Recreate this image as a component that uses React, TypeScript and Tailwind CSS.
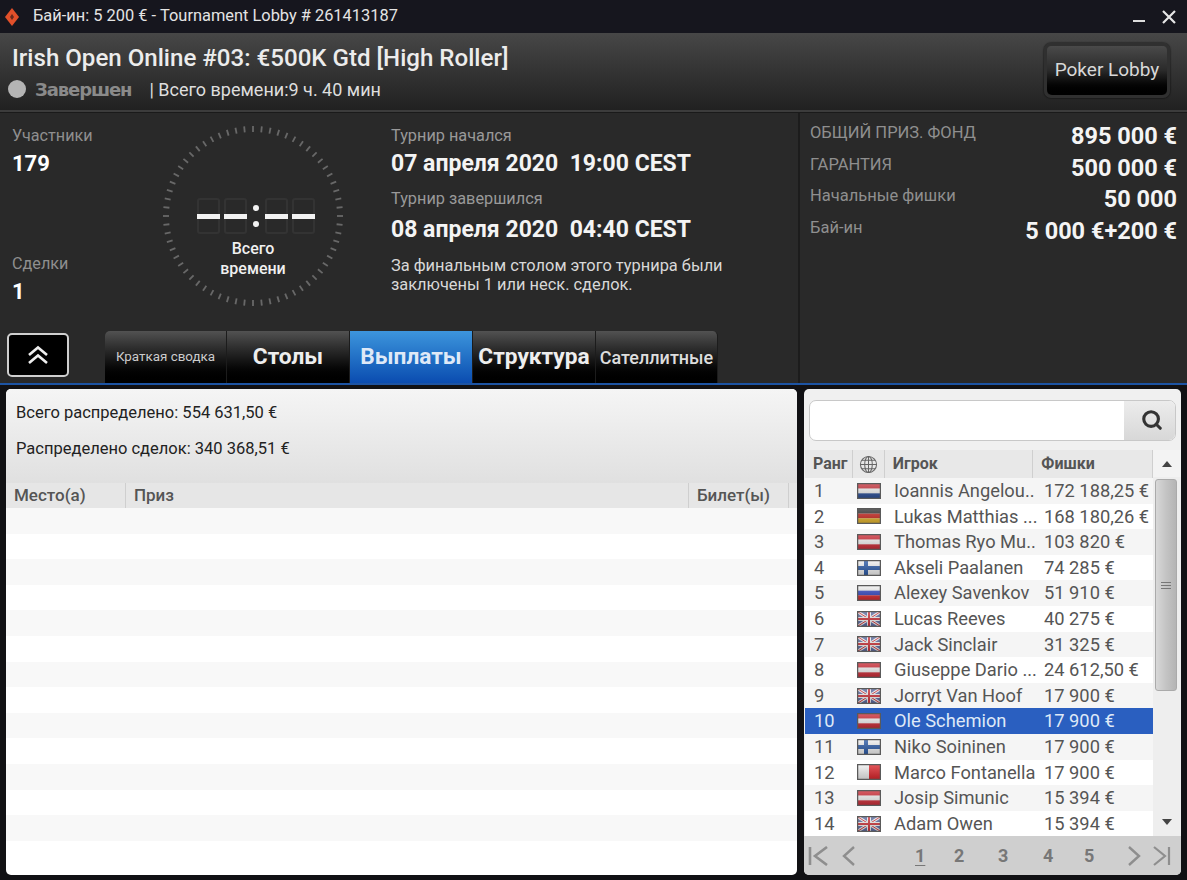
import React from 'react'
import { Search } from 'lucide-react'

type FlagKind = 'nl' | 'de' | 'at' | 'fi' | 'ru' | 'gb' | 'mt'

interface Player {
  name: string;
  chips: string;
  flag: FlagKind;
}

const players: Player[] = [
  { name: 'Ioannis Angelou..', chips: '172 188,25 €', flag: 'nl' },
  { name: 'Lukas Matthias ...', chips: '168 180,26 €', flag: 'de' },
  { name: 'Thomas Ryo Mu..', chips: '103 820 €', flag: 'at' },
  { name: 'Akseli Paalanen', chips: '74 285 €', flag: 'fi' },
  { name: 'Alexey Savenkov', chips: '51 910 €', flag: 'ru' },
  { name: 'Lucas Reeves', chips: '40 275 €', flag: 'gb' },
  { name: 'Jack Sinclair', chips: '31 325 €', flag: 'gb' },
  { name: 'Giuseppe Dario ...', chips: '24 612,50 €', flag: 'at' },
  { name: 'Jorryt Van Hoof', chips: '17 900 €', flag: 'gb' },
  { name: 'Ole Schemion', chips: '17 900 €', flag: 'at' },
  { name: 'Niko Soininen', chips: '17 900 €', flag: 'fi' },
  { name: 'Marco Fontanella', chips: '17 900 €', flag: 'mt' },
  { name: 'Josip Simunic', chips: '15 394 €', flag: 'at' },
  { name: 'Adam Owen', chips: '15 394 €', flag: 'gb' },
]

const stats = [
  { label: 'ОБЩИЙ ПРИЗ. ФОНД', value: '895 000 €' },
  { label: 'ГАРАНТИЯ', value: '500 000 €' },
  { label: 'Начальные фишки', value: '50 000' },
  { label: 'Бай-ин', value: '5 000 €+200 €' },
]

const tabs = [
  { label: 'Краткая сводка', width: 'w-[122px]', size: 'text-[13.4px] font-normal text-[#ccc]' },
  { label: 'Столы', width: 'w-[123px]', size: 'text-[22.7px] font-bold text-[#eee]' },
  { label: 'Выплаты', width: 'w-[123px]', size: 'text-[22.7px] font-bold text-[#dfe9f7]', active: true },
  { label: 'Структура', width: 'w-[123px]', size: 'text-[22.7px] font-bold text-[#eee]' },
  { label: 'Сателлитные', width: 'w-[122px]', size: 'text-[18px] font-medium text-[#ddd]' },
]

const Flag = ({ kind }: { kind: FlagKind }) => {
  const stripes: Record<string, string[]> = {
    nl: ['#c8323c', '#f4f4f4', '#2a4f9a'],
    de: ['#333333', '#cc2a22', '#e8b82c'],
    at: ['#cf2b36', '#f4f4f4', '#cf2b36'],
    ru: ['#f4f4f4', '#3348c4', '#d8282c'],
  }
  return (
    <svg width="24" height="16" viewBox="0 0 24 16" className="block">
      <defs>
        <linearGradient id="flag-shade" x1="0" y1="0" x2="0" y2="1">
          <stop offset="0" stopColor="#fff" stopOpacity="0.25" />
          <stop offset="1" stopColor="#000" stopOpacity="0.22" />
        </linearGradient>
      </defs>
      <rect x="0" y="0" width="24" height="16" fill="#f4f4f4" />
      {stripes[kind] &&
        stripes[kind].map((color, i) => (
          <rect key={i} x="1" y={1 + (i * 14) / 3} width="22" height={14 / 3} fill={color} />
        ))}
      {kind === 'fi' && (
        <>
          <rect x="7" y="1" width="4" height="14" fill="#2a5aa8" />
          <rect x="1" y="6" width="22" height="4" fill="#2a5aa8" />
        </>
      )}
      {kind === 'mt' && <rect x="12" y="1" width="11" height="14" fill="#e0242a" />}
      {kind === 'gb' && (
        <>
          <rect x="1" y="1" width="22" height="14" fill="#5a6aa4" />
          <path d="M1 1 L23 15 M23 1 L1 15" stroke="#f2f2f2" strokeWidth="3" />
          <path d="M1 1 L23 15 M23 1 L1 15" stroke="#cf3038" strokeWidth="1" />
          <path d="M12 1 V15 M1 8 H23" stroke="#f2f2f2" strokeWidth="4" />
          <path d="M12 1 V15 M1 8 H23" stroke="#cf3038" strokeWidth="2" />
        </>
      )}
      <rect x="0" y="0" width="24" height="16" fill="url(#flag-shade)" />
      <rect x="0.6" y="0.6" width="22.8" height="14.8" fill="none" stroke="#5a5a5a" strokeWidth="1.3" />
    </svg>
  )
}

const Gauge = () => {
  const ticks = Array.from({ length: 64 }, (_, i) => (i * 360) / 64)
  const digits = [34, 61, 102, 129]
  return (
    <svg width="180" height="180" viewBox="0 0 180 180" className="absolute left-0 top-0">
      {ticks.map((angle) => (
        <rect key={angle} x="89.1" y="0" width="1.8" height="6" fill="#686868" transform={`rotate(${angle} 90 90)`} />
      ))}
      {digits.map((x) => (
        <g key={x}>
          <rect x={x + 1} y="73" width="21" height="34" rx="2" fill="none" stroke="#333" strokeWidth="2" />
          <rect x={x} y="88" width="23" height="5" fill="#f2f2f2" />
        </g>
      ))}
      <circle cx="93" cy="82" r="3" fill="#f2f2f2" />
      <circle cx="93" cy="98" r="3" fill="#f2f2f2" />
    </svg>
  )
}

const Logo = () => (
  <svg width="14" height="18" viewBox="0 0 14 18">
    <path d="M7 0 L14 9 L7 18 L0 9 Z" fill="#e2502a" />
    <path d="M7 6 L9 9 L7 12 L5 9 Z" fill="#6a2a1c" />
  </svg>
)

const HeaderCell = ({ children, className }: { children?: React.ReactNode; className: string }) => (
  <div className={`flex items-center h-full border-r border-[#cfcfcf] pl-2 text-[#555] ${className}`}>
    {children}
  </div>
)

export default function App() {
  return (
    <div className="w-[1187px] h-[880px] overflow-hidden flex flex-col bg-[#111114] font-['Roboto',sans-serif]">
      {/* title bar */}
      <div className="h-[33px] shrink-0 bg-[#16161e] flex items-center pl-[5px] pr-[11px]">
        <Logo />
        <span className="ml-[14px] text-[16.4px] text-[#e4e4e4]">Бай-ин: 5 200 € - Tournament Lobby # 261413187</span>
        <div className="ml-auto flex items-center gap-[17px]">
          <div className="w-[12px] h-[2px] bg-[#ddd] mt-[9px]" />
          <svg width="14" height="14" viewBox="0 0 14 14">
            <path d="M1 1 L13 13 M13 1 L1 13" stroke="#e6e6e6" strokeWidth="2.2" />
          </svg>
        </div>
      </div>

      {/* header */}
      <div className="h-[77px] shrink-0 bg-gradient-to-b from-[#474747] to-[#212121] flex items-center justify-between pl-3 pr-[17px]">
        <div className="flex flex-col pt-[1px]">
          <div className="text-[24.1px] leading-[30px] font-medium text-[#ececec]">Irish Open Online #03: €500K Gtd [High Roller]</div>
          <div className="flex items-center mt-[4px] h-[24px]">
            <div className="w-[18px] h-[18px] -ml-1 rounded-full bg-[#b4b4b4]" />
            <span className="ml-[9px] text-[18px] font-['DejaVu_Sans',sans-serif] font-bold text-[#8a8a8a] tracking-[-1.1px]">Завершен</span>
            <span className="ml-[18px] text-[18px] text-[#dedede]">| Всего времени:9 ч. 40 мин</span>
          </div>
        </div>
        <div className="rounded-[7px] border-[3px] border-[#303030] shadow-[0_0_2px_#000] -mt-[2px]">
          <div className="w-[120px] h-[49px] rounded-[5px] bg-gradient-to-b from-[#4a4a4a] via-[#2a2a2a] to-black flex items-center justify-center text-[19px] text-[#d8d8d8]">
            Poker Lobby
          </div>
        </div>
      </div>
      <div className="h-[3px] shrink-0 bg-[#3c3c3c] border-b border-[#1a1a1a]" />

      {/* tournament info */}
      <div className="h-[272px] shrink-0 bg-[#292929] flex border-b-2 border-[#1d54a4]">
        <div className="w-[800px] shrink-0 flex flex-col border-r-2 border-[#1c1c1c]">
          <div className="h-[220px] flex">
            <div className="w-[163px] pl-3 pt-[13px] flex flex-col shrink-0">
              <div className="text-[16.2px] leading-[20px] text-[#8f8f8f]">Участники</div>
              <div className="mt-[5px] text-[22px] leading-[26px] font-bold text-white">179</div>
              <div className="mt-[77px] text-[16.2px] leading-[20px] text-[#8f8f8f]">Сделки</div>
              <div className="mt-[5px] text-[22px] leading-[26px] font-bold text-white">1</div>
            </div>
            <div className="relative w-[180px] h-[180px] mt-[13px] shrink-0">
              <Gauge />
              <div className="absolute inset-x-0 top-[113px] text-center text-[16px] leading-[20px] font-medium text-[#f0f0f0]">
                Всего
                <br />
                времени
              </div>
            </div>
            <div className="ml-[48px] pt-[13px] flex flex-col">
              <div className="text-[16.3px] leading-[20px] text-[#999]">Турнир начался</div>
              <div className="mt-[4px] text-[23px] leading-[28px] font-bold text-[#f4f4f4] whitespace-pre">07 апреля 2020  19:00 CEST</div>
              <div className="mt-[11px] text-[16.3px] leading-[20px] text-[#999]">Турнир завершился</div>
              <div className="mt-[7px] text-[23px] leading-[28px] font-bold text-[#f4f4f4] whitespace-pre">08 апреля 2020  04:40 CEST</div>
              <div className="mt-[12px] text-[16.4px] leading-[19px] text-[#d8d8d8]">
                За финальным столом этого турнира были
                <br />
                заключены 1 или неск. сделок.
              </div>
            </div>
          </div>
          <div className="h-[52px] flex items-start">
            <div className="ml-[7px] mt-[2px] w-[62px] h-[44px] rounded-[5px] border-2 border-[#cfcfcf] bg-black flex items-center justify-center">
              <svg width="22" height="20" viewBox="0 0 22 20" fill="none" stroke="#eee" strokeWidth="2.6">
                <path d="M2 10 L11 2.5 L20 10 M2 18 L11 10.5 L20 18" />
              </svg>
            </div>
            <div className="ml-[36px] flex h-[52px]">
              {tabs.map((tab, i) => (
                <div
                  key={tab.label}
                  className={`${tab.width} flex items-center justify-center whitespace-nowrap border-r border-[#1c1c1c] ${i === 0 ? 'rounded-tl-[5px]' : ''} ${i === tabs.length - 1 ? 'rounded-tr-[5px]' : ''} ${tab.active ? 'bg-gradient-to-b from-[#3d95dc] to-[#0b4cb0]' : 'bg-gradient-to-b from-[#525252] via-[#1c1c1c] to-black'} ${tab.size}`}
                >
                  {tab.label}
                </div>
              ))}
            </div>
          </div>
        </div>
        <div className="flex-1 pl-[10px] pr-[10px] pt-[6px] flex flex-col">
          {stats.map((s) => (
            <div key={s.label} className="flex justify-between h-[31.5px]">
              <span className="text-[16.5px] leading-[28px] text-[#8f8f8f]">{s.label}</span>
              <span className="text-[23.5px] leading-[34px] font-bold text-[#f4f4f4]">{s.value}</span>
            </div>
          ))}
        </div>
      </div>

      {/* lower panels */}
      <div className="flex-1 flex gap-[7px] pt-[4px] pb-[5px] pl-[6px] pr-[6px] min-h-0">
        <div className="w-[791px] shrink-0 rounded-[5px] bg-white overflow-hidden flex flex-col">
          <div className="h-[94px] shrink-0 bg-gradient-to-b from-[#f5f5f5] to-[#e0e0e0] pl-[10px] pt-[14px] text-[16.5px] text-[#222]">
            <div className="leading-[20px]">Всего распределено: 554 631,50 €</div>
            <div className="mt-[16px] leading-[20px]">Распределено сделок: 340 368,51 €</div>
          </div>
          <div className="h-[25px] shrink-0 bg-[#e6e6e6] flex text-[17px] font-medium">
            <HeaderCell className="w-[120px]">Место(а)</HeaderCell>
            <HeaderCell className="w-[563px]">Приз</HeaderCell>
            <HeaderCell className="w-[100px]">Билет(ы)</HeaderCell>
          </div>
          {Array.from({ length: 13 }, (_, i) => (
            <div key={i} className={`h-[25.6px] shrink-0 ${i % 2 === 0 ? 'bg-[#f8f8f8]' : 'bg-white'}`} />
          ))}
        </div>

        <div className="flex-1 rounded-[5px] bg-[#f0f0f0] overflow-hidden flex flex-col">
          <div className="h-[61px] shrink-0 pt-[11px] pl-[5px] pr-[5px]">
            <div className="h-[41px] flex rounded-[7px] border border-[#c8c8c8] bg-white overflow-hidden">
              <div className="flex-1" />
              <div className="w-[51px] pl-1 pb-[2px] bg-gradient-to-b from-[#ececec] to-[#d8d8d8] flex items-center justify-center">
                <Search size={22} strokeWidth={3.4} color="#333" />
              </div>
            </div>
          </div>
          <div className="flex-1 flex min-h-0">
            <div className="w-[349px] shrink-0 flex flex-col pl-px">
              <div className="h-[28px] shrink-0 flex bg-[#e8e8e8] text-[16px] font-bold">
                <HeaderCell className="w-[48px]">Ранг</HeaderCell>
                <HeaderCell className="w-[32px] !pl-[6px]">
                  <svg width="19" height="19" viewBox="0 0 20 20" fill="none" stroke="#666" strokeWidth="1.1">
                    <circle cx="10" cy="10" r="8.5" />
                    <ellipse cx="10" cy="10" rx="4" ry="8.5" />
                    <path d="M10 1.5 V18.5 M1.5 10 H18.5 M3 5.5 H17 M3 14.5 H17" />
                  </svg>
                </HeaderCell>
                <HeaderCell className="w-[149px]">Игрок</HeaderCell>
                <HeaderCell className="w-[120px]">Фишки</HeaderCell>
              </div>
              {players.map((p, i) => {
                const selected = i === 9
                return (
                  <div
                    key={p.name + i}
                    className={`h-[25.6px] shrink-0 flex items-center text-[18.3px] whitespace-nowrap ${selected ? 'bg-[#2a5fc0] text-[#dfe9f7]' : i % 2 === 0 ? 'bg-[#f5f5f5] text-[#555]' : 'bg-white text-[#555]'}`}
                  >
                    <span className="w-[48px] pl-[9px]">{i + 1}</span>
                    <span className="w-[41px] pl-[4px]">
                      <Flag kind={p.flag} />
                    </span>
                    <span className="w-[150px] overflow-hidden">{p.name}</span>
                    <span>{p.chips}</span>
                  </div>
                )
              })}
            </div>
            <div className="flex-1 flex flex-col items-center bg-[#eeeeee]">
              <div className="h-[27px] w-full flex items-center justify-center bg-[#f3f3f3]">
                <svg width="10" height="6" viewBox="0 0 10 6">
                  <path d="M5 0 L10 6 H0 Z" fill="#444" />
                </svg>
              </div>
              <div className="mt-[2px] mr-[3px] w-[22px] h-[212px] rounded-[3px] border border-[#aaa] bg-gradient-to-r from-[#d8d8d8] via-[#c4c4c4] to-[#b4b4b4] flex items-center justify-center">
                <div className="flex flex-col gap-[2px]">
                  <div className="w-[10px] h-px bg-[#777]" />
                  <div className="w-[10px] h-px bg-[#777]" />
                  <div className="w-[10px] h-px bg-[#777]" />
                </div>
              </div>
              <div className="mt-auto mb-[11px]">
                <svg width="10" height="6" viewBox="0 0 10 6" className="block">
                  <path d="M0 0 H10 L5 6 Z" fill="#444" />
                </svg>
              </div>
            </div>
          </div>
          <div className="h-[39px] shrink-0 bg-[#cfcfcf] flex items-center pl-[4px] text-[18px] font-bold text-[#777]">
            <svg width="22" height="20" viewBox="0 0 22 20" fill="none" stroke="#8e8e8e" strokeWidth="2.6">
              <path d="M2 1 V19 M19 1 L7 10 L19 19" />
            </svg>
            <svg width="16" height="20" viewBox="0 0 16 20" fill="none" stroke="#8e8e8e" strokeWidth="2.4" className="ml-[11px]">
              <path d="M13 1 L3 10 L13 19" />
            </svg>
            <span className="ml-[58px] w-[39px] underline underline-offset-[3px]">1</span>
            <span className="w-[44px]">2</span>
            <span className="w-[45px]">3</span>
            <span className="w-[41px]">4</span>
            <span className="w-[42px]">5</span>
            <svg width="16" height="20" viewBox="0 0 16 20" fill="none" stroke="#8e8e8e" strokeWidth="2.4">
              <path d="M3 1 L13 10 L3 19" />
            </svg>
            <svg width="20" height="20" viewBox="0 0 20 20" fill="none" stroke="#8e8e8e" strokeWidth="2.2" className="ml-[10px]">
              <path d="M2 1 L13 10 L2 19 M17 1 V19" />
            </svg>
          </div>
        </div>
      </div>
    </div>
  )
}
